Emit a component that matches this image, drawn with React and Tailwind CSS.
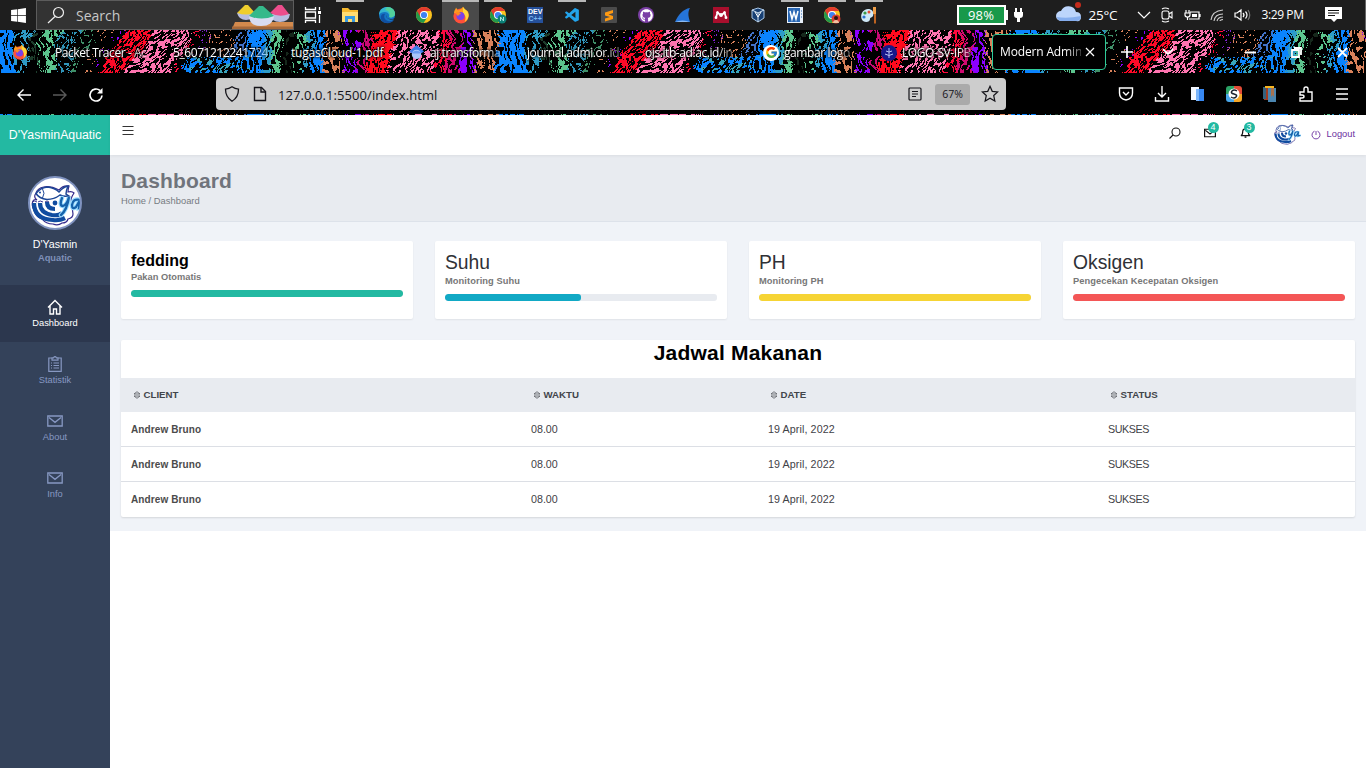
import React from "react";
import { FcGoogle } from "react-icons/fc";
import { FaWindows, FaGithub } from "react-icons/fa";
import { VscVscode } from "react-icons/vsc";

/* ---------- browser theme texture ---------- */
const TILE = 512;
const hash = (x, y) => {
  let h = (x * 374761393 + y * 668265263) | 0;
  h = Math.imul(h ^ (h >>> 13), 1274126177);
  return ((h ^ (h >>> 16)) >>> 0) / 4294967295;
};
const noise = (x, y, wrap) => {
  const x0 = Math.floor(x), y0 = Math.floor(y);
  const fx = x - x0, fy = y - y0;
  const sx = fx * fx * (3 - 2 * fx), sy = fy * fy * (3 - 2 * fy);
  const w = (n) => ((n % wrap) + wrap) % wrap;
  const a = hash(w(x0), y0), b = hash(w(x0 + 1), y0);
  const c = hash(w(x0), y0 + 1), d = hash(w(x0 + 1), y0 + 1);
  return a + (b - a) * sx + (c - a) * sy + (a - b - c + d) * sx * sy;
};
// [end x, colour, density, slant]
const BANDS = [
  [14, "#0a84ff", 0.76, 0], [30, "#2e9bc6", 0.5, 0], [40, "#1d3d2c", 0.3, 0], [54, "#5cc48d", 0.64, 0],
  [72, "#2f93b8", 0.44, 0.2], [88, "#3f8f68", 0.32, 0.3], [100, "#d9825b", 0.24, 0.5], [110, "#8a00ff", 0.18, 0.5],
  [138, "#ff0a28", 0.7, 0.7], [184, "#ff74b0", 0.64, 0.7], [192, "#ff0a3c", 0.42, 0.5], [202, "#7a20c8", 0.2, 0.5],
  [230, "#d9825b", 0.28, 0.5], [246, "#4272c8", 0.5, 0.3], [264, "#0a84ff", 0.8, 0], [271, "#2e9bc6", 0.7, 0],
  [279, "#5cc48d", 0.7, 0], [291, "#16281c", 0.4, 0], [303, "#5cc48d", 0.42, 0.2], [312, "#2e9bc6", 0.48, 0.2],
  [322, "#0a84ff", 0.64, 0], [342, "#d9825b", 0.5, 0], [358, "#8a00ff", 0.5, 0], [368, "#c80a74", 0.55, 0],
  [388, "#ff0a1e", 0.8, 0.2], [436, "#ff74b0", 0.56, 0.4], [450, "#ff0a3c", 0.6, 0.2], [462, "#d00a70", 0.6, 0],
  [474, "#8a00ff", 0.6, 0], [496, "#d9825b", 0.5, 0], [512, "#0a84ff", 0.74, 0],
];
const TEXTURE = (() => {
  const out = {};
  for (let y = 0; y < 43; y++) {
    for (let x = 0; x < TILE; x++) {
      const bx = (x + (noise(x / 16, y / 12, 32) - 0.5) * 9 + (hash(x, y + 99) - 0.5) * 4 + TILE) % TILE;
      let band = BANDS.find((b) => bx < b[0]);
      const sx = (bx + band[3] * (y - 22) + TILE) % TILE;
      band = BANDS.find((b) => sx < b[0]);
      let [, color, dens] = band;
      if (y > 26 && bx > 185 && bx < 258) {
        color = noise(x / 8, y / 3, 64) > 0.4 ? "#0a84ff" : "#3aa5b8";
        dens = 0.55;
      }
      const warp = noise(x / 10, y / 8, 52) * 5;
      const v = noise((x + band[3] * y) / 1.5 + warp, y / (band[3] ? 2.4 : 4.6), 345) * 0.9 + hash(x, y) * 0.1;
      if (v < dens * 0.68 + 0.08) (out[color] ||= []).push(`M${x} ${y}h1v1h-1z`);
    }
  }
  return Object.entries(out).map(([c, p]) => [c, p.join("")]);
})();

function Texture({ id, height, className, shift }) {
  return (
    <svg width="1366" height={height} className={className} shapeRendering="crispEdges" aria-hidden="true">
      <defs>
        <pattern id={id} width="512" height="44" patternUnits="userSpaceOnUse" y={shift}>
          {TEXTURE.map(([c, d]) => <path key={c} d={d} fill={c} />)}
        </pattern>
      </defs>
      <rect width="1366" height={height} fill="#000" />
      <rect width="1366" height={height} fill={`url(#${id})`} />
    </svg>
  );
}

/* ---------- small helpers ---------- */
const Ico = ({ s = 16, vb = "0 0 16 16", children, className = "", w = 1.2 }) => (
  <svg width={s} height={s} viewBox={vb} fill="none" stroke="currentColor" strokeWidth={w} className={`shrink-0 ${className}`}>
    {children}
  </svg>
);

const Firefox = ({ s = 18 }) => (
  <Ico s={s} vb="0 0 18 18" w={0}>
    <circle cx="9" cy="10" r="7.6" fill="#ff4f3a" />
    <path d="M2 7C2 4 4 3 4 1.5L6 4.5 9 3 11 .8l2 2.6 3 2c1.5 4 0 9-4 11 3-4 2-8-1-9H4z" fill="#ff9a1f" />
    <path d="M11 .8c1 3 5 3 5.600 8.200 0 3-2 5.500-3.600 6.500 1-3 1-6-2-8z" fill="#ffd83a" />
    <circle cx="8.500" cy="10" r="4" fill="#7a42e8" />
    <path d="M4 6c2-.5 4 0 5 2-2 0-2 1-3 2-2-1-2-3-2-4z" fill="#ff8a20" />
  </Ico>
);
const Chrome = ({ badge, head }) => (
  <Ico s={18} vb="0 0 18 18" w={0}>
    <circle cx="9" cy="9" r="8" fill="#fcc31e" />
    <path d="M2.100 5a8 8 0 0 0 6.500 12L12.500 11 8.500 9.500z" fill="#229a4b" />
    <path d="M9 5h7A8 8 0 0 0 2.100 5L5.500 11z" fill="#e33b2e" />
    <circle cx="9" cy="9" r="4" fill="#fff" />
    <circle cx="9" cy="9" r="3.100" fill="#3e82f1" />
    {badge && <circle cx="13" cy="13" r="4.500" fill={badge} />}
    {badge && !head && <path d="M11.500 15v-4l3 4v-4" stroke="#a5e0dc" strokeWidth="1" />}
    {head && <><circle cx="13" cy="12" r="2" fill="#2b1512" /><path d="M10 17c0-4 6-4 6 0z" fill="#f0c0a0" /></>}
  </Ico>
);

const apps = [
  { k: "view", el: <Ico s={18} vb="0 0 18 18" className="text-white" w={1.300}><path d="M1.500 1v2.500h10V1M1.500 6h10v6h-10zM1.500 17v-2.500h10V17M15.500 1v3M15.500 9v8" /><path d="M14 5h3v3h-3z" fill="currentColor" stroke="none" /></Ico> },
  { k: "files", top: true, el: <Ico s={18} vb="0 0 18 18" w={0}><path d="M1 2h6l2 2h8v12H1z" fill="#f5b92f" /><path d="M1 6h16v10H1z" fill="#ffdc72" /><path d="M4 10h10v6h-3v-3H7v3H4z" fill="#3598e0" /></Ico> },
  { k: "edge", el: <Ico s={18} vb="0 0 18 18" w={0}><circle cx="9" cy="9" r="8" fill="#1474c4" /><path d="M1 9C1 3 6 1 9 1c5 0 8 3 8 7 0 3-4 4-6 3 1-2-1-5-4-5-3 0-5 1-6 3z" fill="#33b5d0" /><path d="M9 1c5 0 8 3 8 7 0 3-4 4-6 3 2-3 0-6-4-7z" fill="#52d09a" /><path d="M7 8c-2 3 0 6 3 7 2 .5 4 0 6-1-3 4-9 4-12 1-3-4 0-8 3-7z" fill="#104fa0" /><path d="M8 9c0 3 2 4 5 4 2 0 3-.5 4-1-1 2-8 3-9-3z" fill="#1e1e1e" /></Ico> },
  { k: "chrome", el: <Chrome /> },
  { k: "firefox", on: true, top: true, el: <Firefox /> },
  { k: "chrome2", top: true, el: <Chrome badge="#0b8076" /> },
  { k: "dev", el: <span className="flex h-4 w-4 flex-col items-center justify-center bg-[#25509b] font-['Liberation_Sans'] text-[7px] font-bold leading-[7px] text-white"><span>DEV</span><span className="text-[#79b8f0]">C++</span></span> },
  { k: "code", top: true, el: <VscVscode size={17} color="#23a4ec" /> },
  { k: "sublime", el: <Ico s={16} w={0}><rect width="16" height="16" rx="1" fill="#4b4b4b" /><path d="M4 5.500 12 3v3L7.500 7.500 12 9v3l-8 2.500v-3L9 10 4 8.500z" fill="#ff9a12" /></Ico> },
  { k: "github", el: <span className="grid h-4 w-4 place-items-center rounded-full bg-[#7b3fa5]"><FaGithub size={13} color="#fff" /></span> },
  { k: "shark", el: <Ico s={16} w={0}><path d="M0 15C3 8 8 2 15 1c-3 5-1 10 0 14z" fill="#2574d8" /><path d="M0 15c5-2 10-2 15 0z" fill="#8bb9f0" /></Ico> },
  { k: "mendeley", el: <Ico s={16} w={0}><rect width="16" height="16" fill="#a90f2d" /><path d="m3 10.500 1.500-5L8 8.500l3.500-3 1.500 5" stroke="#fff" strokeWidth="1.800" /><circle cx="8" cy="8" r="1.900" fill="#fff" /><circle cx="4.500" cy="5.500" r="1.300" fill="#fff" /><circle cx="11.500" cy="5.500" r="1.300" fill="#fff" /><circle cx="3" cy="10.700" r="1.400" fill="#fff" /><circle cx="13" cy="10.700" r="1.400" fill="#fff" /></Ico> },
  { k: "vbox", el: <Ico s={16} w={1}><path d="m8 1 6 2v8l-6 4-6-4V3z" fill="#173f73" stroke="#a8c6e6" /><path d="m2 3 6 3 6-3M8 6v9" stroke="#d8eafa" /><path d="m5 5 3 5 3-5" stroke="#fff" /></Ico> },
  { k: "word", top: true, el: <Ico s={16} w={0}><rect width="16" height="16" fill="#e8f0fa" /><rect x="1" y="1" width="12" height="14" fill="#2a68b5" /><path d="m3 4 2 8 2-7 2 7 2-8" stroke="#fff" strokeWidth="1.500" /><path d="M14 4h1M14 7h1M14 10h1" stroke="#2a68b5" strokeWidth="1" /></Ico> },
  { k: "chrome3", top: true, el: <Chrome badge="#d63b2f" head /> },
  { k: "paint", top: true, el: <Ico s={18} vb="0 0 18 18" w={0}><path d="M8 3c5 0 6 4 5 7-1 2-3 1-3 3 0 3-4 4-7 2C-1 11 2 3 8 3z" fill="#cfe8f6" /><circle cx="5" cy="7" r="1.600" fill="#3c9a48" /><circle cx="9" cy="6" r="1.500" fill="#e34b32" /><circle cx="4" cy="11" r="1.600" fill="#2e73d0" /><path d="M13 1h3v7h-3z" fill="#f0a04a" /><path d="M14 8h2v9l-1 1-1-1z" fill="#bd6320" /></Ico> },
];

const Bowls = () => (
  <svg width="61" height="28" viewBox="0 0 61 28" className="shrink-0">
    <path d="M3 21h58v7H0z" fill="#d38a4d" /><path d="M0 25.500h61v2.500H0z" fill="#a5683a" />
    <path d="M5 12h17q-1 7-8 7T5 12z" fill="#b7bde0" /><path d="M5 12l8-8h3l7 8q-9 3-18 0z" fill="#efce2d" />
    <path d="M38 13h20q-1 8-10 8t-10-8z" fill="#b7bde0" /><path d="M38 12l8-8h4l7 9q-9 4-19-1z" fill="#ed4d8c" />
    <path d="M17 15h25q-1 10-13 10T17 15z" fill="#d8dcf2" /><path d="M17 15l10-10h4l11 10q-12 5-25 0z" fill="#34b98b" />
  </svg>
);

function Taskbar() {
  return (
    <header className="flex h-[30px] bg-[#1e1e1e] text-white">
      <div className="grid w-9 place-items-center"><FaWindows size={17} /></div>
      <div className="flex w-[258px] items-center justify-between border border-[#5c5c5c] bg-[#333] pl-[10px]">
        <div className="flex items-center">
          <Ico s={18} vb="0 0 18 18" className="text-[#eee]"><circle cx="11.500" cy="6.500" r="5" /><path d="M8 10.500 1 17" /></Ico>
          <span className="ml-[11px] text-[14px] text-[#c8c8c8]">Search</span>
        </div>
        <Bowls />
      </div>
      <nav className="flex">
        {apps.map((a) => (
          <div key={a.k} className={a.on ? "flex w-[37.100px] flex-col items-center bg-[#4a4a4a]" : "flex w-[37.100px] flex-col items-center"}>
            <div className={a.on ? "h-0.5 w-full bg-[#b8b8b8]" : a.top ? "h-0.5 w-7 bg-[#b8b8b8]" : "h-0.5 w-7"} />
            <div className="grid h-[26px] place-items-center">{a.el}</div>
          </div>
        ))}
      </nav>
      <div className="ml-[69px] flex items-center">
        <div className="flex h-[20px] w-[49px] items-center justify-center border-2 border-white bg-[#18994a] text-[13px] leading-none tracking-[0.2px]">98%</div>
        <div className="h-2.5 w-[2px] bg-white" />
        <Ico s={12} vb="0 0 12 16" className="ml-[5px] h-4 w-3"><path d="M3 1v4M8 1v4" strokeWidth="2" /><path d="M1 5h9v3q0 3-3 3v4H4v-4q-3 0-3-3z" fill="#fff" stroke="none" /></Ico>
      </div>
      <svg width="26" height="24" viewBox="0 0 26 22" className="ml-[31px] shrink-0">
        <path d="M5 20a5 5 0 0 1 0-10 8 8 0 0 1 15 1q5 0 5 5t-5 4z" fill="#bdd5fb" /><path d="M5 20q-4-1-4-4 10 2 24-1 0 5-5 5z" fill="#86aeee" /><circle cx="22" cy="4" r="3" fill="#c42b1c" />
      </svg>
      <div className="ml-[7px] w-[40px] self-center text-[13.500px] tracking-[-0.2px]">25°C</div>
      <div className="ml-[8px] flex items-center gap-[9.500px]">
        <Ico s={14} vb="0 0 14 14"><path d="m1 4 6 6 6-6" /></Ico>
        <Ico s={14} vb="0 0 14 16" className="h-4" w={1.100}><rect x="2" y="4" width="7" height="8" rx="2" /><path d="m9 7 3-2v6l-3-2M2 2Q5 0 9 2M2 14q3 2 7 0" /></Ico>
        <Ico s={17} vb="0 0 17 14" className="h-3.5" w={1.200}><path d="M6 4h9v7H5M2 2v3M5 2v3M1 5h5v2q0 2-2.500 2T1 7zM3.500 9v3M16 6v3" /><path d="M8 6h5v3H8z" fill="#fff" stroke="none" /></Ico>
        <Ico s={14} vb="0 0 14 14" w={1.100}><path d="M1 12Q2 3 13 2M4 13q1-7 9-7M7 13q1-4 6-4M10 13q0-1 3-1.500" stroke="#ccc" /></Ico>
        <Ico s={17} vb="0 0 17 14" className="h-3.5" w={1.200}><path d="M1 5h2l4-3v10L3 9H1zM9 5q2 2 0 4M11.500 3.500q3 3.500 0 7" /><path d="M14 2q3.500 5 0 10" stroke="#777" /></Ico>
      </div>
      <div className="ml-[11px] w-[45px] self-center whitespace-nowrap text-[12px] tracking-[-0.4px]">3:29 PM</div>
      <Ico s={17} vb="0 0 17 17" className="ml-[18px] mt-[6px]"><path d="M0 1h17v12h-5l-3 3-3-3H0z" fill="#fff" stroke="none" /><path d="M3 4.500h11M3 7h11M3 9.500h7" stroke="#111" /></Ico>
      <div className="ml-auto w-px bg-[#666]" />
    </header>
  );
}

const tabs = [
  { t: "Packet Tracer - Ac" }, { t: "5_6071212241724" }, { t: "tugasCloud-1.pdf" },
  { t: "aj transforma", i: <Ico s={15} w={0}><path d="m0 7 8-7 8 7-8 5z" fill="#3d7de8" /><circle cx="8" cy="10" r="5" fill="#a9c6fa" /><path d="M3 8q5-4 10 0l-1 1H4z" fill="#6c9df2" /></Ico> },
  { t: "journal.admi.or.id" }, { t: "ojs.itb-ad.ac.id/in" },
  { t: "gambar logo", i: <span className="grid h-4 w-4 place-items-center rounded-full bg-white"><FcGoogle size={13} /></span> },
  { t: "LOGO-SV-IPB", i: <Ico s={16} w={0}><circle cx="8" cy="8" r="8" fill="#17178a" /><path d="M8 3v10M4 9q4 3 8 0M5 6q3 2 6 0" stroke="#b8c0f2" strokeWidth="1" /></Ico> },
];

function TabStrip() {
  return (
    <div className="relative h-[44px] overflow-hidden text-white">
      <Texture id="theme-a" height={44} shift={0} className="absolute inset-0" />
      <div className="relative flex h-full items-center text-[12px]">
        <div className="w-[47px] pl-[12px]"><Firefox s={16} /></div>
        {tabs.map((t) => (
          <div key={t.t} className="flex w-[118px] shrink-0 items-center pl-[8px] pt-px">
            {t.i && <span className="mr-[5px] w-[16px]">{t.i}</span>}
            <span className={t.t.endsWith("pdf")
              ? "whitespace-nowrap tracking-[-0.2px] [text-shadow:0_0_2px_#000,0_0_3px_#000,0_0_3px_#000]"
              : "whitespace-nowrap tracking-[-0.42px] [mask-image:linear-gradient(to_right,#000_80%,#0006)] [text-shadow:0_0_2px_#000,0_0_3px_#000,0_0_3px_#000]"}>{t.t}</span>
          </div>
        ))}
        <div className="ml-[1px] flex h-[36px] w-[114px] shrink-0 items-center rounded-[4px] border border-[#2fc998] bg-black pl-[7px]">
          <span className="w-[81px] whitespace-nowrap tracking-[-0.15px] [mask-image:linear-gradient(to_right,#000_80%,#0005)]">Modern Admin</span>
          <Ico s={10} vb="0 0 10 10" className="ml-1"><path d="m1 1 8 8M9 1 1 9" /></Ico>
        </div>
        <Ico s={12} vb="0 0 12 12" className="ml-[15px]" w={1.700}><path d="M6 0v12M0 6h12" /></Ico>
        <Ico s={12} vb="0 0 12 12" className="ml-[29px]" w={1.700}><path d="m1 3 5 5 5-5" /></Ico>
        <Ico s={11} vb="0 0 11 11" className="ml-[71px]" w={2}><path d="M0 5.500h11" /></Ico>
        <Ico s={11} vb="0 0 11 11" className="ml-[35px]" w={1.800}><path d="M1 3h7v7H1zM3 1h7v7" /></Ico>
        <Ico s={11} vb="0 0 11 11" className="ml-[35px]" w={1.800}><path d="m1 1 9 9M10 1l-9 9" /></Ico>
      </div>
    </div>
  );
}

function AddressBar() {
  return (
    <div className="flex h-[40px] items-center bg-black text-white">
      <div className="flex w-[216px] items-center pl-[16px] pt-px">
        <Ico s={16} w={1.400}><path d="M15 8H2M7.500 2.500 2 8l5.500 5.500" /></Ico>
        <Ico s={16} w={1.400} className="ml-5 text-[#5a5a5a]"><path d="M1 8h13M8.500 2.500 14 8l-5.500 5.500" /></Ico>
        <Ico s={16} w={1.700} className="ml-5"><path d="M14 8.500A6 6 0 1 1 12 3.500" /><path d="M14.500 1v5.500H9z" fill="currentColor" stroke="none" /></Ico>
      </div>
      <div className="flex h-[32px] w-[790px] items-center rounded-[4px] bg-[#cdcdcd] pl-[8px] text-[#15141a]">
        <Ico s={16} w={1.300}><path d="M8 .8q3 2 6.500 2.400 0 8-6.500 12Q1.500 11 1.500 3.200 5 2.800 8 .8z" /></Ico>
        <Ico s={16} className="ml-[12px]" w={1.400}><path d="M2.500 1.500h7l4 4v9h-11z" /><path d="M9 1.500V6h4.500" /></Ico>
        <span className="ml-[10px] w-[621px] pt-[3px] text-[13px] tracking-[0.08px]">127.0.0.1:5500/index.html</span>
        <Ico s={16} className="ml-[8px]"><rect x="2" y="2" width="12" height="12" rx="1" /><path d="M5 5.500h6M5 8h6M5 10.500h4" /></Ico>
        <span className="ml-[12px] grid h-[21px] w-[35px] place-items-center rounded-[3px] bg-[#aaa] pt-0.5 text-[10.500px]">67%</span>
        <Ico s={18} className="ml-[11px]" w={1.100}><path d="m8 1.200 2 4.400 4.800.5-3.500 3.300 1 4.800L8 11.800l-4.300 2.400 1-4.800L1.200 6.100 6 5.600z" /></Ico>
      </div>
      <div className="ml-[112px] flex gap-5">
        <Ico s={16} w={1.400}><path d="M1.500 2h13v5q0 6-6.500 7-6.500-1-6.500-7z" /><path d="m5 6 3 3 3-3" /></Ico>
        <Ico s={16} w={1.400}><path d="M8 0v11M4 7l4 4 4-4M1.500 11v4h13v-4" /></Ico>
        <Ico s={16} w={0}><path d="M1 1h8v13H1z" fill="#f4f8ff" /><path d="M6 3h8v12H6z" fill="#3788f2" /><path d="M6 3h3v12H6z" fill="#7bb5fa" /></Ico>
        <Ico s={16} w={0}><path d="M0 3a3 3 0 0 1 3-3h5v8H0z" fill="#2ba266" /><path d="M8 0h5a3 3 0 0 1 3 3v5H8z" fill="#e44c37" /><path d="M0 8h8v8H3a3 3 0 0 1-3-3z" fill="#4aa8eb" /><path d="M8 8h8v5a3 3 0 0 1-3 3H8z" fill="#f6a728" /><circle cx="8" cy="8" r="5.500" fill="#fff" /><path d="M11 5Q8 3 6 5t2 3 2 3-5 0" stroke="#1b2430" strokeWidth="1.500" /></Ico>
        <Ico s={16} w={0}><path d="M2 1h4v13H2z" fill="#a13d22" /><path d="M1 1h3v12H1z" fill="#35627e" /><path d="M3 0h9v2H3z" fill="#f6b621" /><path d="M6 2h8v14H6z" fill="#4b86b0" /><path d="M9 2v9l1.500-2 1.500 2V2z" fill="#a8714e" /></Ico>
        <Ico s={16} w={1.400}><path d="M2 6h4V3q0-2 2-2t2 2v3h4v9H2v-3h2q2 0 2-1.500T4 9H2z" /></Ico>
        <Ico s={16} w={1.400}><path d="M2 3h12M2 8h12M2 13h12" /></Ico>
      </div>
    </div>
  );
}

/* ---------- dashboard ---------- */
const FishLogo = ({ w, h, vb }) => (
  <svg width={w} height={h} viewBox={vb} fill="none" className="shrink-0">
    <path d="M8 17C10 11 19 8 31 14q4-5 10-4-1 3-1 6 4-1 6 1-2 3-3 6l2 15q0 4-5 5-1 4-6 4-4 3-9 1-7 0-11-5-6-2-8-9-3-5-1-9 1-2 4-1Q5 21 8 17z" fill="#fff" stroke="#352b8c" strokeWidth="1.200" />
    <path d="M6 27q0 16 19 17 6 1 12-2M12 27q0 10 12 12 7 1 10-2M19 26q0 7 8 7" stroke="#104ca0" strokeWidth="4.200" />
    <path d="M4 26q3-2 5 0M10 26q2-2 5 0M17 26q2-2 4 0" stroke="#3c378f" strokeWidth="1" />
    <circle cx="27" cy="27" r="2.400" fill="#104ca0" />
    <path d="M8 17.500q5-6.500 12-6.500 7 1 11 5 4-5 9-6-2 5-2 8l3 2q-5 1-9-1-6 4.500-13 4.500-8-1-11-6z" fill="#fff" stroke="#1d4796" strokeWidth="1.500" />
    <path d="M14.500 13q3 4 0 9" stroke="#1d4796" strokeWidth="1" /><circle cx="12" cy="16.500" r="1" fill="#16449a" />
    <path d="M34 22q-3 8 1 8 4-1 6-9-2 13-8 18M52 24q-7-2-8 5 0 5 4 2l4-7-1 8 4-1" stroke="#9bdcff" strokeWidth="4.500" strokeLinecap="round" />
    <path d="M34 22q-3 8 1 8 4-1 6-9-2 13-8 18M52 24q-7-2-8 5 0 5 4 2l4-7-1 8 4-1" stroke="#1662ab" strokeWidth="2.300" strokeLinecap="round" />
  </svg>
);
const Mail = ({ s = 16, w = 1.2 }) => <Ico s={s} w={w}><path d="M.8 3h14.400v10H.8zM2 4.500l6 4.800 6-4.800" /></Ico>;

const menu = [
  { t: "Dashboard", on: true, i: <Ico s={16} w={1.400}><path d="M1 8.500 8 1.500l7 7M3 7v8h3.500v-5h3v5H13V7" /></Ico> },
  { t: "Statistik", i: <Ico s={16} w={1.200}><path d="M5 2H1.800v13.400h12.400V2H11M5 1.800h1.500Q8-.5 9.500 1.800H11v2.400H5zM4 7h1M6.500 7H12M4 9.500h1M6.500 9.500H12M4 12h1M6.500 12H12" /></Ico> },
  { t: "About", i: <Mail w={1.300} /> },
  { t: "Info", i: <Mail w={1.300} /> },
];

function Sidebar() {
  return (
    <aside className="w-[110px] shrink-0 bg-[#34425a] text-center">
      <div className="flex h-[40px] items-center justify-center bg-[#23b9a2] text-[12.300px] text-white">D'YasminAquatic</div>
      <div className="flex h-[130px] flex-col items-center pt-[21px]">
        <div className="flex h-[54px] w-[54px] items-center overflow-hidden rounded-full border-2 border-[#8093c0] bg-white"><FishLogo w={50} h={50} vb="2 2 50 50" /></div>
        <div className="mt-[7px] text-[10.700px] leading-[14px] text-white">D'Yasmin</div>
        <div className="pt-px text-[9.300px] font-bold leading-[13px] text-[#7f90b8]">Aquatic</div>
      </div>
      {menu.map((m) => (
        <div key={m.t} className={m.on ? "flex h-[57px] flex-col items-center bg-[#2c374e] pt-[14px] text-white" : "flex h-[57px] flex-col items-center pt-[14px] text-[#8798c2]"}>
          {m.i}
          <span className="mt-[2px] text-[9.300px] leading-[12px]">{m.t}</span>
        </div>
      ))}
    </aside>
  );
}

const Badge = ({ children }) => (
  <span className="absolute -top-[5px] left-[4px] grid h-[11px] w-[11px] place-items-center rounded-full bg-[#23b9a2] text-[9px] leading-none text-white">{children}</span>
);

const cards = [
  { t: "fedding", s: "Pakan Otomatis", c: "bg-[#23b9a2]", w: "w-full", bold: true },
  { t: "Suhu", s: "Monitoring Suhu", c: "bg-[#12a9c5]", w: "w-1/2" },
  { t: "PH", s: "Monitoring PH", c: "bg-[#f6d434]", w: "w-full" },
  { t: "Oksigen", s: "Pengecekan Kecepatan Oksigen", c: "bg-[#f45656]", w: "w-full" },
];

const Sort = () => <Ico s={8} vb="0 0 8 8" className="mr-[3px] text-[#55585e]" w={0.800}><path d="M1 3 4 .7 7 3zM1 5l3 2.300L7 5z" /></Ico>;
const COLS = "grid grid-cols-[400px_237px_340px_257px] items-center";

function Main() {
  return (
    <main className="flex flex-1 flex-col bg-white">
      <div className="z-10 flex h-[40px] justify-between bg-white pl-[12px] pr-[11px] shadow-[0_1px_3px_rgba(0,0,0,0.06)]">
        <Ico s={12} vb="0 0 12 12" className="mt-[10px] text-[#333]" w={1.200}><path d="M.5 1.500h11M.5 5.500h11M.5 9.500h11" /></Ico>
        <div className="flex h-[35px] items-center text-[#111]">
          <Ico s={12} vb="0 0 12 12" w={1.100}><circle cx="7" cy="5" r="4" /><path d="M4 8 .5 11.500" /></Ico>
          <span className="relative ml-[23px]"><Mail s={12} w={1.600} /><Badge>4</Badge></span>
          <span className="relative ml-[24px]"><Ico s={11} vb="0 0 12 12" w={1.300}><path d="M1 9.500q2-1 2-5Q3 2 6 2t3 2.500q0 4 2 5zM5 11h2" /></Ico><Badge>3</Badge></span>
          <span className="ml-[22px] mt-[2px]"><FishLogo w={28} h={24} vb="1 6 56 44" /></span>
          <span className="ml-[10px] mt-[4px] flex items-center text-[#6b2fa0]">
            <Ico s={10} vb="0 0 10 10" w={0.900}><path d="M3.500 1.200a4 4 0 1 0 3 0M5 1v4" /></Ico>
            <span className="ml-[6px] pt-px text-[9.300px]">Logout</span>
          </span>
        </div>
      </div>
      <div className="h-[67px] border-b border-[#dde2ea] bg-[#e8ebf0] pl-[11px] pt-[13px]">
        <h1 className="text-[21px] font-bold leading-[26px] tracking-[0.15px] text-[#70747c]">Dashboard</h1>
        <p className="text-[9.400px] leading-[13px] text-[#777b82]">Home / Dashboard</p>
      </div>
      <div className="h-[309px] bg-[#f0f3f8] px-[11px] pt-[19px]">
        <div className="grid grid-cols-4 gap-[22px]">
          {cards.map((c) => (
            <section key={c.t} className="h-[78px] rounded-[2px] bg-white px-[10px] pt-[10px] shadow-[0_1px_2px_rgba(0,0,0,0.07)]">
              <h2 className={c.bold ? "text-[16px] font-bold leading-[20px] text-black" : "text-[19.300px] leading-[24px] text-[#2f3136]"}>{c.t}</h2>
              <p className={c.bold ? "text-[9.300px] font-bold leading-[12px] text-[#777]" : "text-[9.300px] font-bold leading-[12px] tracking-[0.08px] text-[#777]"}>{c.s}</p>
              <div className="mt-[7px] h-[7px] overflow-hidden rounded-[3px] bg-[#e8ebf0]"><div className={`h-full rounded-[3px] ${c.c} ${c.w}`} /></div>
            </section>
          ))}
        </div>
        <section className="mt-[21px] rounded-[2px] bg-white shadow-[0_1px_2px_rgba(0,0,0,0.12)]">
          <h2 className="h-[38px] text-center text-[21px] font-bold leading-[25px] tracking-[0.2px] text-black">Jadwal Makanan</h2>
          <div className={`${COLS} h-[34px] bg-[#e8ebf0] text-[9.700px] font-bold text-[#42454b]`}>
            {["CLIENT", "WAKTU", "DATE", "STATUS"].map((h) => <span key={h} className="flex items-center pl-[11.500px]"><Sort />{h}</span>)}
          </div>
          {[0, 1, 2].map((r) => (
            <div key={r} className={`${COLS} h-[35px] text-[10.700px] text-[#3f4247] [&>span]:pl-[10px] ${r < 2 ? "border-b border-[#dcdfe5]" : ""}`}>
              <span className="text-[10px] font-bold tracking-[0.1px] text-[#4b4b4b]">Andrew Bruno</span>
              <span>08.00</span>
              <span className="tracking-[0.1px]">19 April, 2022</span>
              <span className="tracking-[-0.4px]">SUKSES</span>
            </div>
          ))}
        </section>
      </div>
    </main>
  );
}

export default function App() {
  return (
    <div className="flex h-[768px] w-[1366px] flex-col overflow-hidden bg-black font-['Open_Sans','Noto_Sans',sans-serif]">
      <Taskbar />
      <TabStrip />
      <AddressBar />
      <Texture id="theme-b" height={1} shift={-12} className="block shrink-0" />
      <div className="flex flex-1 font-['Liberation_Sans',Arial,sans-serif]">
        <Sidebar />
        <Main />
      </div>
    </div>
  );
}
